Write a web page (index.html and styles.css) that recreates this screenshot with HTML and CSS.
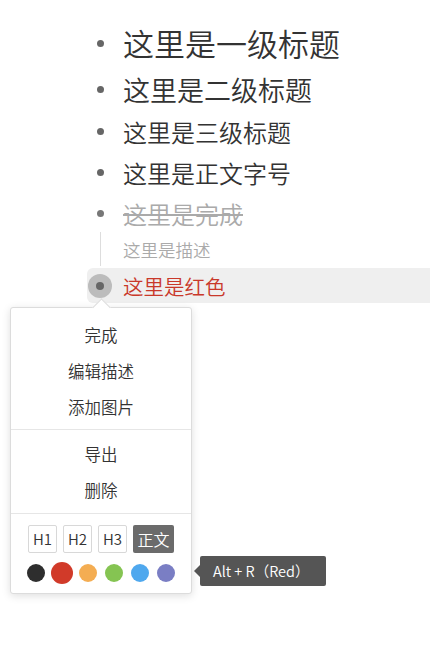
FILE: index.html
```html
<!DOCTYPE html>
<html lang="zh">
<head>
<meta charset="utf-8">
<link rel="stylesheet" href="styles.css">
</head>
<body>
<div class="outline">
  <div class="row h1"><span class="bullet"><i></i></span><span class="text">这里是一级标题</span></div>
  <div class="row h2"><span class="bullet"><i></i></span><span class="text">这里是二级标题</span></div>
  <div class="row h3"><span class="bullet"><i></i></span><span class="text">这里是三级标题</span></div>
  <div class="row body"><span class="bullet"><i></i></span><span class="text">这里是正文字号</span></div>
  <div class="row done"><span class="bullet"><i></i></span><span class="text">这里是完成</span></div>
  <div class="row desc"><span class="bullet"><b class="vline"></b></span><span class="text">这里是描述</span></div>
  <div class="row red active"><span class="bullet"><span class="ring"><i></i></span></span><span class="text">这里是红色</span></div>
</div>

<div class="menu">
  <div class="section first">
    <div class="item">完成</div>
    <div class="item">编辑描述</div>
    <div class="item">添加图片</div>
  </div>
  <div class="section second">
    <div class="item">导出</div>
    <div class="item">删除</div>
  </div>
  <div class="section tools">
    <div class="levels">
      <span class="lvl">H1</span>
      <span class="lvl">H2</span>
      <span class="lvl">H3</span>
      <span class="lvl on">正文</span>
    </div>
    <div class="swatches">
      <span class="sw"><i class="c-black"></i></span>
      <span class="sw sel"><i class="c-red"></i></span>
      <span class="sw"><i class="c-orange"></i></span>
      <span class="sw"><i class="c-green"></i></span>
      <span class="sw"><i class="c-blue"></i></span>
      <span class="sw"><i class="c-purple"></i></span>
    </div>
  </div>
</div>

<div class="tip">Alt + R（Red）</div>
</body>
</html>
```

FILE: styles.css
```css
html, body {
  margin: 0;
  padding: 0;
  background: #fff;
  font-family: "Noto Sans CJK SC", "Noto Sans", sans-serif;
  font-weight: 350;
  color: #333;
}

.outline {
  padding: 19px 0 0 87px;
  display: flex;
  flex-direction: column;
}

.row {
  display: flex;
  align-items: center;
}

.bullet {
  width: 26px;
  align-self: stretch;
  display: flex;
  align-items: center;
  justify-content: center;
  flex: none;
}

.bullet > i {
  width: 7px;
  height: 7px;
  border-radius: 50%;
  background: #666;
}

.text {
  margin-left: 10px;
  white-space: nowrap;
}

.h1 { height: 46px; font-size: 31px; }
.h1 .bullet { padding-top: 2px; }
.h2 { height: 48px; font-size: 27px; }
.h3 { height: 36px; font-size: 24px; }
.body { height: 46px; font-size: 24px; }
.done { height: 36px; font-size: 24px; color: #aaa; }
.done .text { text-decoration: line-through; text-decoration-thickness: 1.5px; }
.done .bullet > i { background: #777; }

.desc { height: 36px; font-size: 17.5px; color: #aaa; }
.vline {
  width: 1px;
  height: 34px;
  background: #ddd;
  margin-left: 1px;
}

.red {
  height: 35px;
  margin-top: 1px;
  font-size: 20.5px;
  color: #c9382a;
}
.active {
  background: #efefef;
  border-radius: 6px 0 0 6px;
}
.ring {
  width: 24px;
  height: 24px;
  border-radius: 50%;
  background: #bcbcbc;
  display: flex;
  align-items: center;
  justify-content: center;
}
.ring i {
  width: 8px;
  height: 8px;
  border-radius: 50%;
  background: #666;
}

/* popup menu */
.menu {
  position: absolute;
  left: 10px;
  top: 307px;
  width: 180px;
  background: #fff;
  border: 1px solid #dcdcdc;
  border-radius: 3px;
  box-shadow: 0 2px 8px rgba(0, 0, 0, 0.13);
  font-size: 16.5px;
  color: #333;
}
.menu::before {
  content: "";
  position: absolute;
  left: 84px;
  top: -7px;
  width: 12px;
  height: 12px;
  background: #fff;
  border-top: 1px solid #dcdcdc;
  border-left: 1px solid #dcdcdc;
  transform: rotate(45deg);
}

.section {
  display: flex;
  flex-direction: column;
}
.section + .section { border-top: 1px solid #e6e6e6; }
.first { padding: 9px 0 4px; }
.second { padding: 6px 0 5px; }
.item {
  height: 36px;
  line-height: 36px;
  text-align: center;
}

.tools { padding: 11px 0 9px; align-items: center; }
.levels {
  display: flex;
  gap: 6px;
}
.lvl {
  width: 27px;
  height: 26px;
  border: 1px solid #d8d8d8;
  border-radius: 2px;
  font-size: 15px;
  line-height: 26px;
  text-align: center;
  color: #333;
}
.lvl.on {
  width: 41px;
  height: 28px;
  border: none;
  background: #6b6b6b;
  color: #fff;
  font-size: 16px;
  line-height: 28px;
}

.swatches {
  display: flex;
  gap: 4px;
  margin-top: 9px;
}
.sw {
  width: 22px;
  height: 22px;
  display: flex;
  align-items: center;
  justify-content: center;
}
.sw i {
  width: 18px;
  height: 18px;
  border-radius: 50%;
}
.sw.sel i { width: 22px; height: 22px; }
.c-black { background: #2e2e2e; }
.c-red { background: #d13a29; }
.c-orange { background: #f4ad52; }
.c-green { background: #85c452; }
.c-blue { background: #4fa8ee; }
.c-purple { background: #7a7ec4; }

/* tooltip */
.tip {
  position: absolute;
  left: 200px;
  top: 556px;
  width: 113px;
  height: 30px;
  padding-left: 13px;
  background: #555;
  border-radius: 2px;
  color: #fff;
  font-size: 14.5px;
  line-height: 30px;
  white-space: nowrap;
}
.tip::before {
  content: "";
  position: absolute;
  left: -6px;
  top: 9px;
  border-top: 6px solid transparent;
  border-bottom: 6px solid transparent;
  border-right: 6px solid #555;
}
```
